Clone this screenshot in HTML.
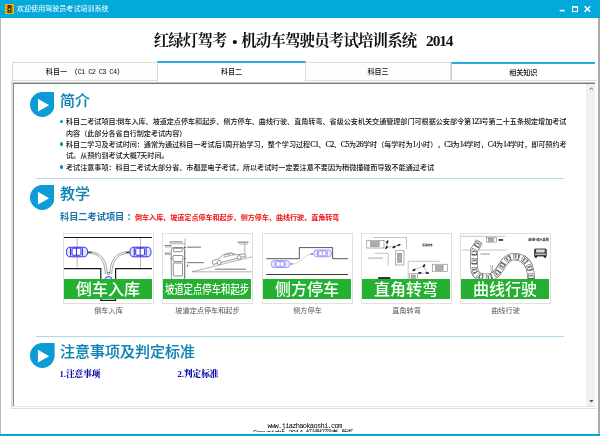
<!DOCTYPE html>
<html lang="zh-CN">
<head>
<meta charset="utf-8">
<title>欢迎使用驾驶员考试培训系统</title>
<style>
*{margin:0;padding:0;box-sizing:border-box;}
html,body{width:600px;height:436px;overflow:hidden;background:#fff;}
body{position:relative;text-spacing-trim:space-all;font-kerning:none;font-family:"Liberation Sans","Noto Sans CJK SC",sans-serif;color:#222;}
.abs{position:absolute;white-space:nowrap;}
#titlebar{left:0;top:0;width:600px;height:18px;background:#04a9db;}
#titletext{left:17px;top:4.4px;font-size:7.063px;line-height:10px;color:#fff;}
#lborder{left:0;top:18px;width:1px;height:416px;background:#b8b8b8;}
#rborder{left:598.4px;top:18px;width:1.6px;height:416px;background:#aaa;}
#bborder{left:0;top:434px;width:600px;height:2px;background:#04a9db;}
#heading{left:153.7px;top:30px;font-family:"Liberation Serif","Noto Serif CJK SC",serif;font-weight:bold;font-size:15.4px;letter-spacing:-0.8px;line-height:22px;color:#111;}
.tab{position:absolute;top:62px;height:19px;border:1px solid #dcdcdc;background:#fdfdfd;font-size:7.063px;line-height:18.4px;text-align:center;color:#111;font-weight:500;white-space:nowrap;}
#tab1{left:12px;width:146px;}
#tab2{left:157px;width:149px;top:61px;height:21px;border:none;border-left:1px solid #dcdcdc;border-right:1px solid #dcdcdc;border-top:2px solid #29abe0;background:#fff;line-height:17px;}
#tab3{left:305px;width:146px;}
#tab4{left:450.5px;width:144.5px;border-right:none;border-top:2px solid #29abe0;border-left:1.5px solid #ccc;background:#fff;line-height:17.4px;}
#pane{left:10.5px;top:80px;width:586px;height:329px;border:1px solid #dedede;border-right-color:#f6f6f6;}
#tab2cover{left:157.5px;top:79px;width:148px;height:3px;background:#fff;}
#box{left:12px;top:82px;width:583px;height:325px;border-top:1px solid #c2c2c2;border-left:1px solid #e2e2e2;border-right:0;border-bottom:1px solid #e4e4e4;background:#fff;}
#box2{left:13px;top:83px;width:582px;height:323px;border-top:1px solid #7a7a7a;border-left:1px solid #8a8a8a;}
#scroll{left:586px;top:84px;width:9px;height:322px;background:#f0f0f0;}
.sep{position:absolute;height:1px;background:#addbea;}
.h{position:absolute;white-space:nowrap;font-size:15px;line-height:20px;color:#0f82b4;font-weight:500;-webkit-text-stroke:0.12px #0f82b4;}
.l{font-size:8px;line-height:0;letter-spacing:-0.56px;-webkit-text-stroke:0.15px #111;}
.p{position:absolute;white-space:nowrap;font-family:"Liberation Serif","Noto Sans CJK SC",sans-serif;font-size:7.085px;line-height:11px;color:#111;font-weight:500;}
.bul{position:absolute;width:3.4px;height:3.4px;border-radius:50%;background:#1587b6;}
.thumb{position:absolute;top:233px;width:91px;height:71px;border:1px solid #e0e0e0;background:#fff;overflow:hidden;}
.dg{position:absolute;left:0;top:0;}
.band{position:absolute;left:0;top:45px;width:88px;height:20px;background:#24b030;color:#fff;text-align:center;white-space:nowrap;}
.cap{position:absolute;top:306px;width:91px;text-align:center;font-size:7.15px;line-height:11px;color:#555;white-space:nowrap;}
.lnk{position:absolute;white-space:nowrap;font-family:"Liberation Serif","Noto Serif CJK SC",serif;font-weight:bold;font-size:8.6px;line-height:12px;color:#0a0aac;font-weight:900;}
</style>
</head>
<body>
<div id="root" style="position:absolute;left:0;top:0;width:600px;height:436px;will-change:transform;">
<div class="abs" id="titlebar"></div>
<svg class="abs" style="left:5px;top:3.9px" width="9.3" height="9.9" viewBox="0 0 9.3 9.9">
<rect width="9.3" height="9.9" fill="#f6b400"/>
<rect x="2.7" y="0.9" width="3.7" height="8.2" rx="0.9" fill="#2a2010"/>
<path d="M1 2h1.8v1.1zM1 4.8h1.8v1.1zM1 7.3h1.8v1.1zM8.2 2h-1.8v1.1zM8.2 4.8h-1.8v1.1zM8.2 7.3h-1.8v1.1z" fill="#2a2030"/>
<circle cx="4.5" cy="2.5" r="1.05" fill="#f41010"/>
<circle cx="4.5" cy="5.2" r="1.05" fill="#f4e410"/>
<circle cx="4.5" cy="7.8" r="1.05" fill="#10c410"/>
</svg>
<div class="abs" id="titletext">欢迎使用驾驶员考试培训系统</div>
<svg class="abs" style="left:555px;top:3px" width="40" height="12" viewBox="0 0 40 12">
<rect x="4.7" y="6.8" width="5" height="1.6" fill="#fff"/>
<rect x="17.5" y="3.6" width="5" height="5" fill="none" stroke="#fff" stroke-width="1"/>
<rect x="17" y="3.1" width="6" height="1.6" fill="#fff"/>
<path d="M29.6 3.2l5.6 5.6M35.2 3.2l-5.6 5.6" stroke="#fff" stroke-width="1.5" fill="none"/>
</svg>
<div class="abs" id="lborder"></div>
<div class="abs" id="rborder"></div>
<div class="abs" id="bborder"></div>

<div class="abs" id="heading">红绿灯驾考<span style="display:inline-block;width:14.6px;text-align:center;transform:scale(1.7);">·</span>机动车驾驶员考试培训系统&nbsp;&nbsp;<span style="margin-left:3.6px;letter-spacing:-1.1px">2014</span></div>

<div class="abs" id="pane"></div>
<div class="tab" id="tab1">科目一<span style="display:inline-block;width:3.5px"> </span>（<span style="font-family:'Liberation Mono',monospace;font-size:7px;letter-spacing:-0.67px;margin-right:0.67px">C1 C2 C3 C4</span>）</div>
<div class="tab" id="tab3">科目三</div>
<div class="tab" id="tab4">相关知识</div>
<div class="abs" id="tab2cover"></div>
<div class="tab" id="tab2">科目二</div>
<div class="abs" id="box"></div>
<div class="abs" id="box2"></div>
<div class="abs" id="scroll"></div>
<svg class="abs" style="left:585.5px;top:84px" width="9.5" height="322" viewBox="0 0 9.5 322">
<path d="M3.6 5.6l1.7-1.5 1.7 1.5" stroke="#555" stroke-width="0.9" fill="none"/>
<path d="M3.2 316l2.2 2.4 2.2-2.4z" fill="#555"/>
</svg>

<!-- section 1 -->
<svg class="abs" style="left:29.8px;top:92.4px" width="24.6" height="25" viewBox="0 0 25 25" preserveAspectRatio="none"><path d="M12.5 0H25V12.5A12.5 12.5 0 1 1 12.5 0Z" fill="#0b9bd5"/><path d="M8.1 6.7L19.5 13.2L8.1 19.6Z" fill="#fff"/></svg>
<div class="h" style="left:60px;top:90.6px">简介</div>
<div class="bul" style="left:60px;top:119.7px"></div>
<div class="p" style="left:66px;top:117.2px">科目二考试项目<span class="l">:</span>倒车入库、坡道定点停车和起步、侧方停车、曲线行驶、直角转弯、省级公安机关交通管理部门可根据公安部令第<span class="l">123</span>号第二十五条规定增加考试</div>
<div class="p" style="left:66px;top:128.6px">内容（此部分各省自行制定考试内容）</div>
<div class="bul" style="left:60px;top:142.45px"></div>
<div class="p" style="left:66px;top:139.95px">科目二学习及考试时间：通常为通过科目一考试后<span class="l">1</span>周开始学习，整个学习过程<span class="l">C1</span>、<span class="l">C2</span>、<span class="l">C5</span>为<span class="l">26</span>学时（每学时为<span class="l">1</span>小时），<span class="l">C3</span>为<span class="l">14</span>学时，<span class="l">C4</span>为<span class="l">14</span>学时，即可预约考</div>
<div class="p" style="left:66px;top:151.3px">试。从预约到考试大概<span class="l">7</span>天时间。</div>
<div class="bul" style="left:60px;top:165.2px"></div>
<div class="p" style="left:66px;top:162.7px">考试注意事项：科目二考试大部分省、市都是电子考试，所以考试时一定要注意不要因为稍微撞碰而导致不能通过考试</div>

<!-- section 2 -->
<div class="sep" style="left:36px;top:177.5px;width:528px"></div>
<svg class="abs" style="left:29.8px;top:185.2px" width="24.6" height="25" viewBox="0 0 25 25" preserveAspectRatio="none"><path d="M12.5 0H25V12.5A12.5 12.5 0 1 1 12.5 0Z" fill="#0b9bd5"/><path d="M8.1 6.7L19.5 13.2L8.1 19.6Z" fill="#fff"/></svg>
<div class="h" style="left:60px;top:183.8px">教学</div>
<div class="abs" style="left:60px;top:210.5px;font-size:9.2px;line-height:13px;font-weight:bold;color:#1773a8">科目二考试项目<span style="margin-left:2.5px;margin-right:-2.5px">：</span></div>
<div class="abs" style="left:135px;top:212px;font-size:7.063px;line-height:11px;font-weight:bold;color:#f01414">倒车入库、坡道定点停车和起步、侧方停车、曲线行驶、直角转弯</div>

<div class="thumb" style="left:63px"><svg class="dg" width="89" height="69" viewBox="0 0 89 69"><path d="M0 3.5H88" stroke="#1a1a1a" stroke-width="1.1"/><path d="M13.2 4V33.5M76.5 4V33.5" stroke="#777" stroke-width="0.5"/><path d="M0 34.7H36.8V66.3H51.6V34.7H88" stroke="#1a1a1a" stroke-width="1.2" fill="none"/><path d="M23.5 17.6C34 17.6 42.5 22 43.3 40M23.5 19.2C33 19.4 40.5 23 41.3 40" stroke="#555" stroke-width="0.55" fill="none"/><path d="M66 17.6C55 17.6 46.5 22 45.7 40M66 19.2C56 19.4 48.5 23 47.7 40" stroke="#555" stroke-width="0.55" fill="none"/><path d="M24 18.3h3.5M62 18.3h3.5" stroke="#333" stroke-width="1"/><path d="M43 38.5h3.2M43.5 40.3h2.2" stroke="#444" stroke-width="0.6"/><g stroke="#2424e4" stroke-width="0.95" fill="#e2e2ff"><rect x="2.5" y="13.2" width="21" height="9.6" rx="4.12"/><rect x="8.02" y="14.17" width="8.90" height="7.06" rx="1" fill="#fff"/><path d="M6.54 13.60v8.20M12.48 13.80v7.80M18.41 13.60v8.20" fill="none"/></g><g stroke="#2424e4" stroke-width="0.95" fill="#e2e2ff"><rect x="66" y="13.2" width="21" height="9.6" rx="4.12"/><rect x="71.72" y="14.17" width="8.90" height="7.06" rx="1" fill="#fff"/><path d="M70.24 13.60v8.20M76.18 13.80v7.80M82.11 13.60v8.20" fill="none"/></g><rect x="41" y="42.6" width="7" height="16" rx="3" fill="#dcdcff" stroke="#2626e6" stroke-width="0.8"/></svg><div class="band" style="font-size:16px;line-height:21px;font-weight:500">倒车入库</div></div>
<div class="thumb" style="left:162px"><svg class="dg" width="89" height="69" viewBox="0 0 89 69"><g stroke="#666" stroke-width="0.5" fill="none"><path d="M22 4.5V44.5"/><path d="M6.5 9.8H22M2 13H9M2 20.6H8"/><path d="M29 37.8H89M29 37.8L89 22.8"/><path d="M81.8 10V23.6M76 10h9"/></g><g stroke="#444" stroke-width="0.6" fill="#fff"><rect x="8.3" y="13.5" width="13.2" height="33" rx="2.5"/><rect x="10" y="21.5" width="9.8" height="6" rx="1"/><rect x="10.3" y="29" width="9.2" height="13" rx="1"/><path d="M7 24.5h1.6M21.2 24.5h1.6" /><rect x="10.5" y="14.3" width="8.8" height="3.4" rx="0.8"/></g><g transform="translate(56.2 28.5) rotate(-14) translate(-6.5 2)" stroke="#555" stroke-width="0.55" fill="#fff"><path d="M0 -1.6V-4.4Q0 -5.3 1 -5.4L7.5 -5.8L11.5 -8.3Q12.2 -8.7 13 -8.7H19.2Q20.2 -8.7 21 -8.1L25.2 -5.4L32 -4.4Q34 -4 34 -2.8V-1.6Z"/><path d="M12.2 -5.9L14 -7.9H17.2V-5.9ZM18.2 -7.9H19.6L23.4 -5.7L18.2 -5.9Z" stroke-width="0.4"/><circle cx="6.5" cy="-2" r="2"/><circle cx="27.1" cy="-2" r="2"/></g><g fill="#888"><rect x="6.5" y="7.3" width="13" height="1.2"/><rect x="1.5" y="11" width="7" height="1.1"/><rect x="1.5" y="18.6" width="6" height="1.1"/><rect x="24" y="12.6" width="14" height="1.2"/><rect x="24" y="28" width="17" height="1.2"/><rect x="74.5" y="7.6" width="11" height="1.2"/><rect x="52" y="34.6" width="31" height="1.2"/></g><circle cx="21.9" cy="13.4" r="0.7" fill="#222"/><circle cx="24.5" cy="31.8" r="0.7" fill="#222"/></svg><div class="band"><span style="display:inline-block;font-size:12px;line-height:22.6px;font-weight:500;transform:scaleX(0.78);transform-origin:50% 50%;margin:0 -20px">坡道定点停车和起步</span></div></div>
<div class="thumb" style="left:262px"><svg class="dg" width="89" height="69" viewBox="0 0 89 69"><path d="M3.3 24.7H36.3V13.6H69.6V24.7H85" stroke="#444" stroke-width="0.9" fill="none"/><path d="M3.3 40.5H85" stroke="#222" stroke-width="0.9"/><path d="M29 30C38 30 41 20 50 20" stroke="#aaa" stroke-width="0.5" fill="none"/><path d="M27.2 30h2.4M47.6 20h2.4" stroke="#444" stroke-width="0.9"/><g stroke="#7474f2" stroke-width="0.7" fill="#eeeeff"><rect x="8.3" y="26.6" width="18.4" height="7" rx="2.94"/><rect x="13.27" y="27.58" width="7.73" height="5.04" rx="1" fill="#fff"/><path d="M11.98 27.40v5.40M17.13 27.60v5.00M22.28 27.40v5.40" fill="none"/></g><g stroke="#7474f2" stroke-width="0.7" fill="#eeeeff"><rect x="50.8" y="16" width="17.6" height="6.8" rx="2.86"/><rect x="55.55" y="16.95" width="7.39" height="4.90" rx="1" fill="#fff"/><path d="M54.32 16.80v5.20M59.25 17.00v4.80M64.18 16.80v5.20" fill="none"/></g></svg><div class="band" style="font-size:16px;line-height:21px;font-weight:500">侧方停车</div></div>
<div class="thumb" style="left:361px"><svg class="dg" width="89" height="69" viewBox="0 0 89 69"><g stroke="#888" stroke-width="0.5" fill="none"><path d="M11.2 3.5H44.5V15"/><path d="M12.8 19.3H26.2V31.8"/><path d="M46.2 45V27.3H78"/><path d="M25.5 8L24.7 13.3M32 13.2L37 11M25 13.5L37 11M62 31.8L52 36M57.8 39H65.3M62 31.8L65.3 39"/></g><rect x="4.8" y="6.3" width="17.2" height="7.7" fill="#fff" stroke="#666" stroke-width="0.5"/><rect x="8.58" y="7.69" width="8.60" height="4.93" fill="#adadad" stroke="#666" stroke-width="0.4"/><rect x="33.7" y="16.8" width="8.3" height="14.2" fill="#fff" stroke="#666" stroke-width="0.5"/><rect x="35.53" y="19.36" width="4.15" height="9.09" fill="#adadad" stroke="#666" stroke-width="0.4"/><rect x="70.3" y="30.2" width="15" height="7.5" fill="#fff" stroke="#666" stroke-width="0.5"/><rect x="73.60" y="31.55" width="7.50" height="4.80" fill="#adadad" stroke="#666" stroke-width="0.4"/><rect x="47.8" y="39.7" width="7.5" height="7" fill="#fff" stroke="#666" stroke-width="0.5"/><rect x="49.45" y="40.96" width="3.75" height="4.48" fill="#adadad" stroke="#666" stroke-width="0.4"/><rect x="23.8" y="7.2" width="3" height="1.6" fill="#111" transform="rotate(-60 25.3 8)"/><rect x="23.0" y="12.7" width="3" height="1.6" fill="#111" transform="rotate(-50 24.5 13.5)"/><rect x="30.5" y="12.399999999999999" width="3" height="1.6" fill="#111" transform="rotate(-25 32 13.2)"/><rect x="35.5" y="10.2" width="3" height="1.6" fill="#111" transform="rotate(-25 37 11)"/><rect x="60.5" y="31.0" width="3" height="1.6" fill="#111" transform="rotate(-60 62 31.8)"/><rect x="50.5" y="35.2" width="3" height="1.6" fill="#111" transform="rotate(-30 52 36)"/><rect x="56.3" y="38.2" width="3" height="1.6" fill="#111" transform="rotate(0 57.8 39)"/><rect x="63.8" y="38.2" width="3" height="1.6" fill="#111" transform="rotate(0 65.3 39)"/><rect x="6" y="23.6" width="15" height="1" fill="#aaa"/><rect x="16" y="43" width="12.5" height="2.2" rx="1" fill="#333"/><text x="60.3" y="11.6" font-size="2.6" font-weight="bold" fill="#111" font-family="Liberation Sans,Noto Sans CJK SC,sans-serif">直角转弯</text></svg><div class="band" style="font-size:16px;line-height:21px;font-weight:500">直角转弯</div></div>
<div class="thumb" style="left:460px"><svg class="dg" width="89" height="69" viewBox="0 0 89 69"><path d="M0 2.3H44M0.7 16H45.7" stroke="#888" stroke-width="0.5"/><path id="rd" d="M18.5 7.5L13.2 16V33C13.2 41 18 43.5 25 43.5C36 43.5 38 36 42 30C47 22 55 21 62 25C68 29 70 35 70 46" stroke="#555" stroke-width="7.6" fill="none"/><path d="M18.5 7.5L13.2 16V33C13.2 41 18 43.5 25 43.5C36 43.5 38 36 42 30C47 22 55 21 62 25C68 29 70 35 70 46" stroke="#fff" stroke-width="6.4" fill="none"/><path d="M18.5 7.5L13.2 16V33C13.2 41 18 43.5 25 43.5C36 43.5 38 36 42 30C47 22 55 21 62 25C68 29 70 35 70 46" stroke="#555" stroke-width="5" fill="none" stroke-dasharray="6.4 2.6"/><path d="M18.5 7.5L13.2 16V33C13.2 41 18 43.5 25 43.5C36 43.5 38 36 42 30C47 22 55 21 62 25C68 29 70 35 70 46" stroke="#fff" stroke-width="3.9" fill="none" stroke-dasharray="5.4 3.6" stroke-dashoffset="-0.5"/><path d="M18.5 7.5L13.2 16V33C13.2 41 18 43.5 25 43.5C36 43.5 38 36 42 30C47 22 55 21 62 25C68 29 70 35 70 46" stroke="#777" stroke-width="3.2" fill="none" stroke-dasharray="1.6 7.4" stroke-dashoffset="-1.6"/><path d="M18.5 7.5L13.2 16V33C13.2 41 18 43.5 25 43.5C36 43.5 38 36 42 30C47 22 55 21 62 25C68 29 70 35 70 46" stroke="#333" stroke-width="5.4" fill="none" stroke-dasharray="0.7 8.3" stroke-dashoffset="-5"/><rect x="25.3" y="3.5" width="10" height="4.6" fill="#fff" stroke="#666" stroke-width="0.5"/><rect x="27.50" y="4.33" width="5.00" height="2.94" fill="#adadad" stroke="#666" stroke-width="0.4"/><rect x="37.5" y="5.2" width="4.6" height="1.5" fill="#111"/><rect x="19.5" y="19.6" width="9.5" height="0.9" fill="#888"/><path d="M29.6 31l0.9 8M31.6 31v8" stroke="#666" stroke-width="0.5"/><g><rect x="73" y="14.6" width="12.8" height="8" rx="1.6" fill="#444"/><rect x="75" y="15.4" width="8.8" height="3" rx="0.8" fill="#ddd"/><rect x="74" y="19.6" width="10.8" height="1.4" fill="#bbb"/><rect x="73.6" y="22" width="2.4" height="1.6" fill="#111"/><rect x="82.8" y="22" width="2.4" height="1.6" fill="#111"/></g><text x="67.3" y="7.3" font-size="2.9" font-weight="bold" fill="#111" font-family="Liberation Sans,Noto Sans CJK SC,sans-serif">曲线行驶示意图</text></svg><div class="band" style="font-size:16px;line-height:21px;font-weight:500">曲线行驶</div></div>
<div class="cap" style="left:63px">倒车入库</div>
<div class="cap" style="left:162px">坡道定点停车和起步</div>
<div class="cap" style="left:262px">侧方停车</div>
<div class="cap" style="left:361px">直角转弯</div>
<div class="cap" style="left:460px">曲线行驶</div>

<!-- section 3 -->
<div class="sep" style="left:36px;top:336px;width:528px"></div>
<svg class="abs" style="left:30px;top:343.4px" width="24.6" height="25" viewBox="0 0 25 25" preserveAspectRatio="none"><path d="M12.5 0H25V12.5A12.5 12.5 0 1 1 12.5 0Z" fill="#0b9bd5"/><path d="M8.1 6.7L19.5 13.2L8.1 19.6Z" fill="#fff"/></svg>
<div class="h" style="left:60px;top:341.7px">注意事项及判定标准</div>
<div class="lnk" style="left:59.5px;top:368.3px">1.注意事项</div>
<div class="lnk" style="left:177.5px;top:368.3px">2.判定标准</div>

<!-- watermark -->
<div class="abs" style="left:267.5px;top:420.6px;font-family:'Liberation Mono',monospace;font-size:7px;letter-spacing:-0.67px;line-height:10px;color:#000;">www.jiazhaokaoshi.com</div>
<div class="abs" style="left:253px;top:428.9px;width:100px;height:2.7px;overflow:hidden;font-family:'Liberation Mono','Noto Sans CJK SC',monospace;font-size:7px;letter-spacing:-0.67px;line-height:8px;color:#000;">Copyright 2014 红绿灯驾考 版权所有</div>
</div>
</body>
</html>
